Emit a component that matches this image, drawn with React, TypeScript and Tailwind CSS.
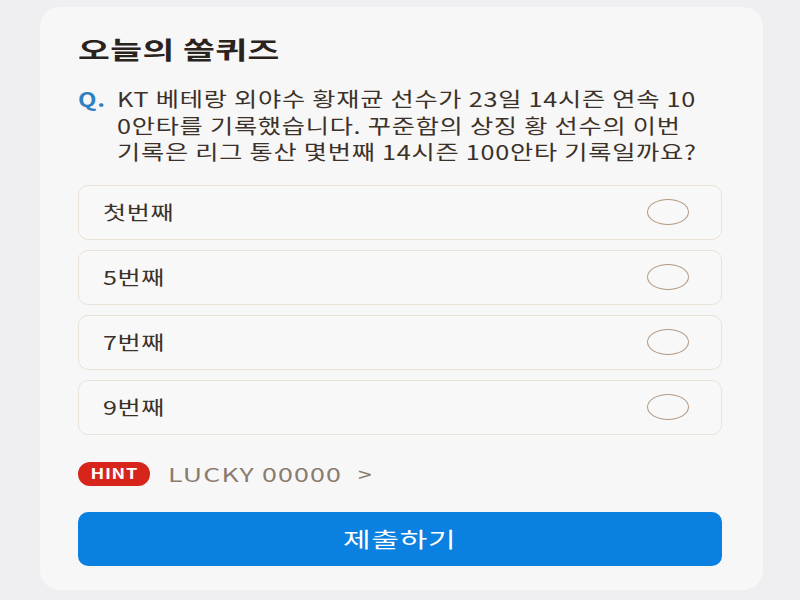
const options = ["첫번째", "5번째", "7번째", "9번째"];

export default function App() {
  return (
    <div
      className="w-[800px] h-[600px] bg-[#efeef0] pt-[7px] pl-[40px]"
      style={{ fontFamily: '"Noto Sans CJK KR", "Noto Sans", sans-serif' }}
    >
      <div className="w-[723px] h-[583px] rounded-[20px] bg-[#f7f7f7] pl-[38px] pr-[41px] pt-[26px]">
        <h1 className="inline-block origin-left scale-x-[1.44] text-[24px] leading-[32px] font-bold text-[#2a221c] tracking-[0.3px]">
          오늘의 쏠퀴즈
        </h1>

        <div className="mt-[21px] flex text-[20px] leading-[26.5px] text-[#3b3129] tracking-[0.6px]">
          <span className="inline-block origin-left scale-x-[1.2] font-bold text-[#2f7fc1] w-[39px] shrink-0">Q.</span>
          <p className="origin-left scale-x-[1.26] whitespace-nowrap">
            KT 베테랑 외야수 황재균 선수가 23일 14시즌 연속 10
            <br />
            0안타를 기록했습니다. 꾸준함의 상징 황 선수의 이번
            <br />
            기록은 리그 통산 몇번째 14시즌 100안타 기록일까요?
          </p>
        </div>

        <div className="mt-[19px] flex flex-col gap-[10px]">
          {options.map((o) => (
            <div
              key={o}
              className="h-[55px] rounded-[10px] border border-[#ebe2d9] bg-[#f8f8f8] flex items-center justify-between pl-[24px] pr-[32px]"
            >
              <span className="inline-block origin-left scale-x-[1.32] text-[19px] text-[#3b3129] tracking-[0.5px]">{o}</span>
              <span className="w-[42px] h-[26px] rounded-[50%] border-[1.5px] border-[#b39a84]" />
            </div>
          ))}
        </div>

        <div className="mt-[25px] flex items-center">
          <span className="w-[72px] h-[24px] rounded-full bg-[#d8251b] text-white text-[14px] font-bold flex items-center justify-center">
            <span className="inline-block scale-x-[1.3] tracking-[0.5px]">HINT</span>
          </span>
          <span className="ml-[18px] w-[172px] inline-block origin-left scale-x-[1.41] text-[19px] text-[#8b7b6f] tracking-[0.8px] whitespace-nowrap">
            LUCKY 00000
          </span>
          <span className="ml-[18px] inline-block origin-left scale-x-[1.3] text-[19px] text-[#8b7b6f]">&gt;</span>
        </div>

        <button className="mt-[24px] w-full h-[54px] rounded-[10px] bg-[#0a80e0] text-white text-[21px] flex items-center justify-center">
          <span className="inline-block scale-x-[1.43] tracking-[0.5px]">제출하기</span>
        </button>
      </div>
    </div>
  );
}
